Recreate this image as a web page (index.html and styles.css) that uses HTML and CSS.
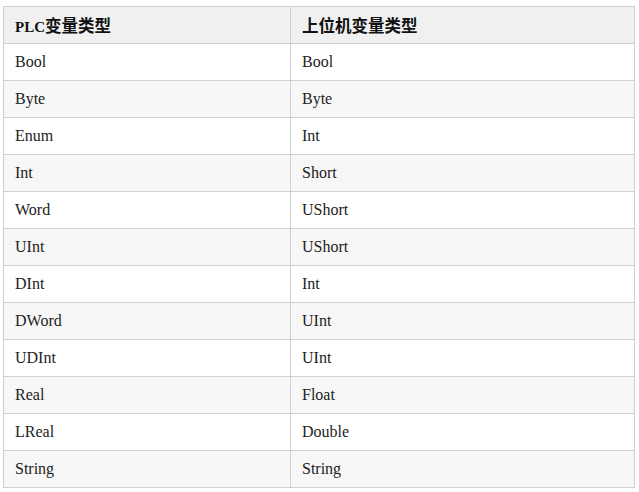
FILE: index.html
```html
<!DOCTYPE html>
<html lang="zh">
<head>
<meta charset="utf-8">
<link rel="stylesheet" href="styles.css">
</head>
<body>
<table class="types">
  <thead>
    <tr><th>PLC<span class="cjk">变量类型</span></th><th><span class="cjk">上位机变量类型</span></th></tr>
  </thead>
  <tbody>
    <tr><td>Bool</td><td>Bool</td></tr>
    <tr><td>Byte</td><td>Byte</td></tr>
    <tr><td>Enum</td><td>Int</td></tr>
    <tr><td>Int</td><td>Short</td></tr>
    <tr><td>Word</td><td>UShort</td></tr>
    <tr><td>UInt</td><td>UShort</td></tr>
    <tr><td>DInt</td><td>Int</td></tr>
    <tr><td>DWord</td><td>UInt</td></tr>
    <tr><td>UDInt</td><td>UInt</td></tr>
    <tr><td>Real</td><td>Float</td></tr>
    <tr><td>LReal</td><td>Double</td></tr>
    <tr><td>String</td><td>String</td></tr>
  </tbody>
</table>
</body>
</html>
```
FILE: styles.css
```css
html, body {
  margin: 0;
  padding: 0;
  background: #ffffff;
}
body {
  padding: 6px 4px 0 3px;
  font-family: "Liberation Serif", "Noto Sans CJK SC", serif;
  color: #222;
}
.types {
  width: 632px;
  border-collapse: collapse;
  font-size: 16px;
}
.types th,
.types td {
  border: 1px solid #cfcfcf;
  height: 37px;
  padding: 0 11px;
  text-align: left;
  vertical-align: middle;
  box-sizing: border-box;
}
.types th {
  background: #f0f0f0;
  font-weight: bold;
  font-size: 15px;
  color: #111;
}
.types .cjk {
  font-size: 16.5px;
}
.types th:first-child,
.types td:first-child {
  width: 287px;
}
.types tbody tr:nth-child(even) td {
  background: #f7f7f7;
}
```
